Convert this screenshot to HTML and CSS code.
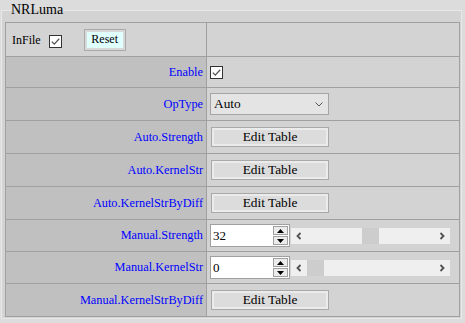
FILE: index.html
```html
<!DOCTYPE html>
<html>
<head>
<meta charset="utf-8">
<link rel="stylesheet" href="styles.css">
</head>
<body>
<fieldset class="panel">
  <legend class="panel-title">NRLuma</legend>
  <table class="grid">
    <colgroup><col class="col-label"><col class="col-value"></colgroup>
    <tr class="row r-head">
      <td class="cell-head">
        <div class="head-line">
          <span class="head-text">InFile</span>
          <span class="check check-head"><svg width="13" height="13" viewBox="0 0 13 13"><rect x="0.5" y="0.5" width="12" height="12" fill="#fff" stroke="#333"/><polyline points="2.8,6.6 5.3,9.1 10.2,3.8" fill="none" stroke="#555" stroke-width="1.3"/></svg></span>
          <span class="btn-reset">Reset</span>
        </div>
      </td>
      <td class="cell-value"></td>
    </tr>
    <tr class="row r-31">
      <td class="cell-label">Enable</td>
      <td class="cell-value"><span class="check"><svg width="13" height="13" viewBox="0 0 13 13"><rect x="0.5" y="0.5" width="12" height="12" fill="#fff" stroke="#333"/><polyline points="2.8,6.6 5.3,9.1 10.2,3.8" fill="none" stroke="#555" stroke-width="1.3"/></svg></span></td>
    </tr>
    <tr class="row r-33">
      <td class="cell-label">OpType</td>
      <td class="cell-value">
        <div class="select"><span>Auto</span><svg width="8" height="5" viewBox="0 0 8 5"><polyline points="0.5,0.5 4,4 7.5,0.5" fill="none" stroke="#555" stroke-width="1"/></svg></div>
      </td>
    </tr>
    <tr class="row r-33">
      <td class="cell-label">Auto.Strength</td>
      <td class="cell-value"><span class="btn-edit">Edit Table</span></td>
    </tr>
    <tr class="row r-33">
      <td class="cell-label">Auto.KernelStr</td>
      <td class="cell-value"><span class="btn-edit">Edit Table</span></td>
    </tr>
    <tr class="row r-33">
      <td class="cell-label">Auto.KernelStrByDiff</td>
      <td class="cell-value"><span class="btn-edit">Edit Table</span></td>
    </tr>
    <tr class="row r-32">
      <td class="cell-label">Manual.Strength</td>
      <td class="cell-value">
        <div class="num-line">
          <div class="spin">
            <span class="spin-text">32</span>
            <span class="spin-btns">
              <span class="spin-btn"><svg width="7" height="4" viewBox="0 0 7 4"><polygon points="0,4 7,4 3.5,0" fill="#000"/></svg></span>
              <span class="spin-btn"><svg width="7" height="4" viewBox="0 0 7 4"><polygon points="0,0 7,0 3.5,4" fill="#000"/></svg></span>
            </span>
          </div>
          <div class="hbar">
            <span class="hbar-arrow"><svg width="6" height="8" viewBox="0 0 6 8"><polyline points="4.5,1 1.5,4 4.5,7" fill="none" stroke="#505050" stroke-width="1.8"/></svg></span>
            <span class="hbar-track"><span class="hbar-thumb" style="margin-left:55px"></span></span>
            <span class="hbar-arrow"><svg width="6" height="8" viewBox="0 0 6 8"><polyline points="1.5,1 4.5,4 1.5,7" fill="none" stroke="#505050" stroke-width="1.8"/></svg></span>
          </div>
        </div>
      </td>
    </tr>
    <tr class="row r-32">
      <td class="cell-label">Manual.KernelStr</td>
      <td class="cell-value">
        <div class="num-line">
          <div class="spin">
            <span class="spin-text">0</span>
            <span class="spin-btns">
              <span class="spin-btn"><svg width="7" height="4" viewBox="0 0 7 4"><polygon points="0,4 7,4 3.5,0" fill="#000"/></svg></span>
              <span class="spin-btn"><svg width="7" height="4" viewBox="0 0 7 4"><polygon points="0,0 7,0 3.5,4" fill="#000"/></svg></span>
            </span>
          </div>
          <div class="hbar">
            <span class="hbar-arrow"><svg width="6" height="8" viewBox="0 0 6 8"><polyline points="4.5,1 1.5,4 4.5,7" fill="none" stroke="#505050" stroke-width="1.8"/></svg></span>
            <span class="hbar-track"><span class="hbar-thumb" style="margin-left:0px"></span></span>
            <span class="hbar-arrow"><svg width="6" height="8" viewBox="0 0 6 8"><polyline points="1.5,1 4.5,4 1.5,7" fill="none" stroke="#505050" stroke-width="1.8"/></svg></span>
          </div>
        </div>
      </td>
    </tr>
    <tr class="row r-33">
      <td class="cell-label">Manual.KernelStrByDiff</td>
      <td class="cell-value"><span class="btn-edit">Edit Table</span></td>
    </tr>
  </table>
</fieldset>
</body>
</html>
```
FILE: styles.css
```css
html, body {
  margin: 0;
  padding: 0;
  background: #dcdcdc;
}
body, .panel, .panel-title, .grid, .grid td, .btn-edit, .btn-reset, .select, .spin-text {
  font-family: "Liberation Serif", "DejaVu Serif", serif;
}
body {
  font-size: 12px;
  color: #000;
}
.panel {
  margin: 2px 3px 0 1px;
  padding: 4px 1px 1px 3px;
  border: 1px solid #e8e8e8;
  background: #d3d3d3;
  width: 456px;
  box-sizing: border-box;
}
.panel-title {
  font-size: 14px;
  line-height: 16px;
  padding: 0;
  margin-left: 6px;
}
.grid {
  border-collapse: collapse;
  width: 455px;
  table-layout: fixed;
  font-size: 12px;
}
.col-label { width: 201px; }
.grid td {
  border: 1px solid #a0a0a0;
  padding: 0;
  vertical-align: middle;
}
.r-head { height: 34px; }
.r-31 { height: 31px; }
.r-32 { height: 32px; }
.r-33 { height: 33px; }
.cell-head {
  background: #d3d3d3;
  padding-left: 6px !important;
}
.head-line {
  display: flex;
  align-items: center;
}
.head-text { line-height: 14px; }
.check { display: inline-flex; }
.check svg { display: block; }
.check-head { margin-left: 8px; margin-top: 3px; }
.btn-reset {
  margin-left: 22px;
  width: 42px;
  height: 22px;
  box-sizing: border-box;
  border: 1px solid #a9a9a9;
  box-shadow: inset 0 0 0 2px #d8d8d8;
  background: #e0ffff;
  display: flex;
  align-items: center;
  justify-content: center;
  font-size: 12px;
}
.cell-label {
  background: #c0c0c0;
  color: #0000ff;
  text-align: right;
  padding-right: 3px !important;
  font-size: 12.3px;
}
.cell-value {
  background: #d3d3d3;
  padding-left: 3px !important;
}
.cell-value .check { vertical-align: middle; }
.select {
  width: 119px;
  height: 22px;
  box-sizing: border-box;
  border: 1px solid #a5a5a5;
  background: #e4e4e4;
  display: flex;
  align-items: center;
  justify-content: space-between;
  padding: 0 5px 0 3px;
  font-size: 13.33px;
}
.select svg { display: block; margin-top: 1px; }
.btn-edit {
  margin-left: 1px;
  width: 118px;
  height: 20px;
  box-sizing: border-box;
  border: 1px solid #a9a9a9;
  box-shadow: inset 0 0 0 2px #ebebeb;
  background: #dcdcdc;
  display: flex;
  align-items: center;
  justify-content: center;
  font-size: 13.33px;
}
.num-line {
  display: flex;
  align-items: center;
}
.spin {
  width: 80px;
  height: 23px;
  box-sizing: border-box;
  border: 1px solid #a0a0a0;
  background: #fff;
  display: flex;
  justify-content: space-between;
  padding: 1px;
}
.spin-text {
  font-size: 13px;
  line-height: 15px;
  padding-left: 1px;
  margin-top: 2px;
}
.spin-btns {
  display: flex;
  flex-direction: column;
  width: 15px;
  gap: 1px;
}
.spin-btn {
  flex: 1;
  border: 1px solid #a0a0a0;
  background: #ececec;
  display: flex;
  align-items: center;
  justify-content: center;
}
.spin-btn svg { display: block; }
.hbar {
  margin-left: 1px;
  width: 159px;
  height: 16px;
  background: #efefef;
  display: flex;
  align-items: stretch;
}
.hbar-arrow {
  width: 16px;
  display: flex;
  align-items: center;
  justify-content: center;
}
.hbar-arrow svg { display: block; }
.hbar-track {
  flex: 1;
  display: flex;
}
.hbar-thumb {
  width: 17px;
  background: #cdcdcd;
}
```
